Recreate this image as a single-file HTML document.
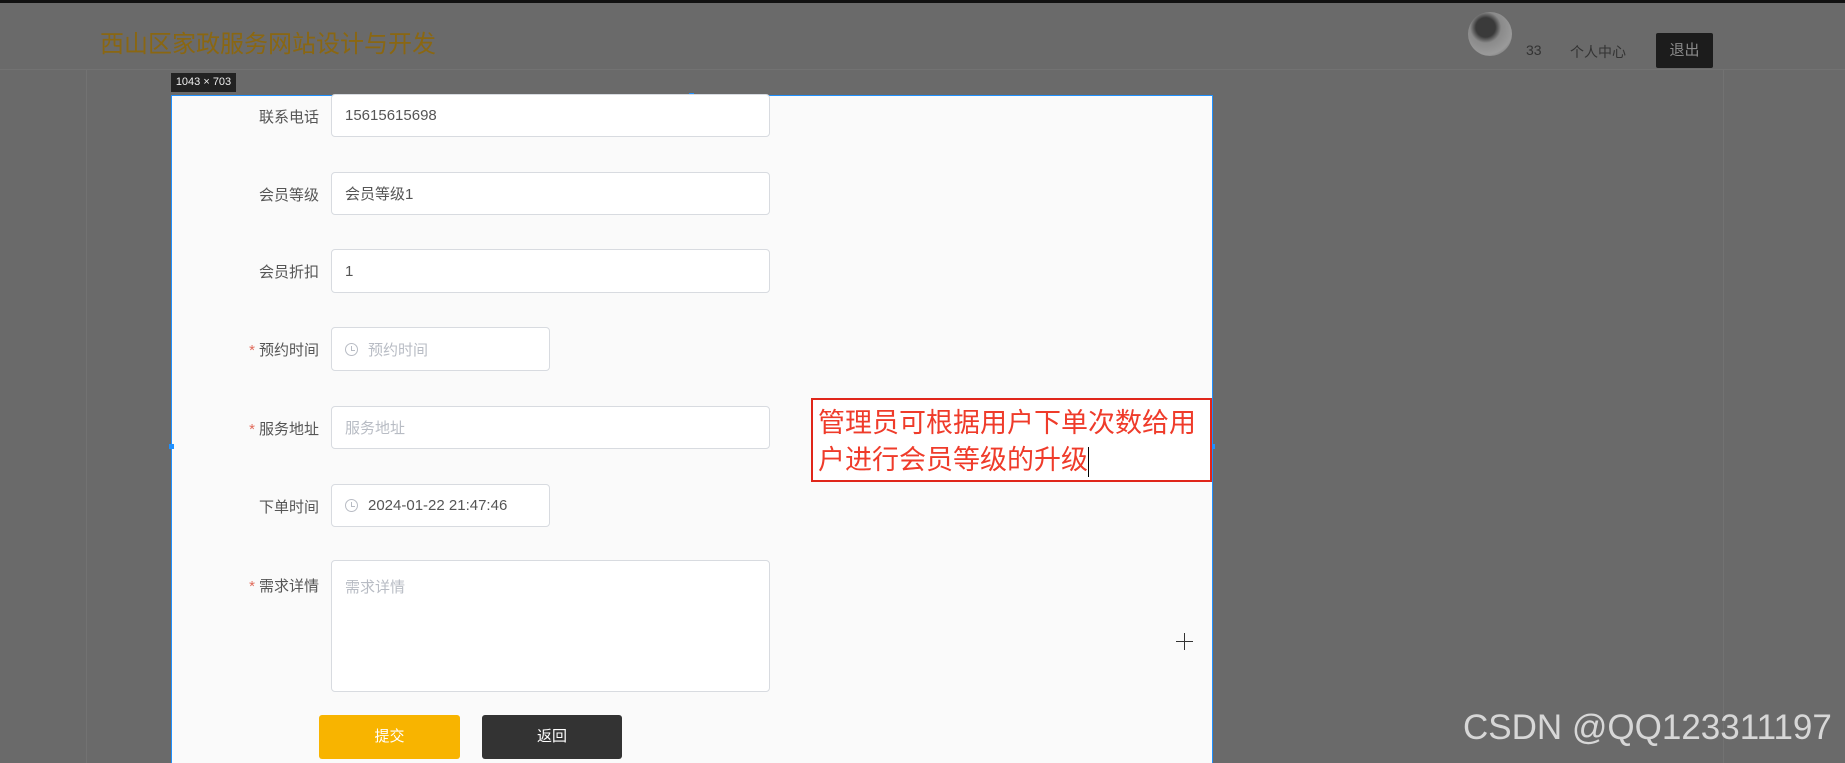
<!DOCTYPE html>
<html><head><meta charset="utf-8"><style>
*{margin:0;padding:0;box-sizing:border-box}
html,body{width:1845px;height:763px;overflow:hidden}
body{background:#6a6a6a;font-family:"Liberation Sans","Noto Sans CJK SC",sans-serif;position:relative}
.abs{position:absolute}
.lbl{position:absolute;right:calc(1845px - 319px);font-size:15px;color:#555;white-space:nowrap}
.star{color:#e06a5a;margin-right:4px}
.inp{position:absolute;left:331px;background:#fff;border:1px solid #d8dbe0;border-radius:4px;font-size:15px;color:#555;padding-left:13px;display:flex;align-items:center}
.ph{color:#b8bcc4}
.clk{width:13px;height:13px;border:1.5px solid #b8bcc4;border-radius:50%;margin-right:10px;position:relative}
.clk:after{content:"";position:absolute;left:4.5px;top:2px;width:3px;height:4px;border-left:1.5px solid #b8bcc4;border-bottom:1.5px solid #b8bcc4}
.h{position:absolute;width:5px;height:5px;background:#1e90ff}
</style></head><body>
<div class="abs" style="left:0;top:0;width:1845px;height:3px;background:#111"></div>
<div class="abs" style="left:0;top:69px;width:1845px;height:1px;background:#727272"></div>
<div class="abs" style="left:86px;top:70px;width:1px;height:700px;background:#727272"></div>
<div class="abs" style="left:1723px;top:70px;width:1px;height:700px;background:#727272"></div>
<div class="abs" style="left:100px;top:24px;font-size:24px;color:#8a6712">西山区家政服务网站设计与开发</div>
<div class="abs" style="left:1468px;top:12px;width:44px;height:44px;border-radius:50%;background:radial-gradient(circle at 40% 35%,#3a3a3a 0 25%,#8a8a8a 40%,#9a9a9a 70%,#555 100%)"></div>
<div class="abs" style="left:1526px;top:42px;font-size:14px;color:#333">33</div>
<div class="abs" style="left:1570px;top:42px;font-size:14px;color:#333">个人中心</div>
<div class="abs" style="left:1656px;top:33px;width:57px;height:35px;background:#1c1c1c;border-radius:2px;color:#8a8a8a;font-size:15px;text-align:center;line-height:35px">退出</div>
<div class="abs" style="left:171px;top:73px;width:65px;height:19px;background:#222;color:#eee;font-size:11px;line-height:19px;text-align:center">1043 × 703</div>
<div class="abs" style="left:171px;top:95px;width:1042px;height:680px;background:#fafafa;border:1px solid #1e90ff"></div>
<div class="h" style="left:689px;top:93px"></div>
<div class="h" style="left:169px;top:444px"></div>
<div class="h" style="left:1210px;top:444px"></div>

<div class="lbl" style="top:106px">联系电话</div>
<div class="inp" style="top:94px;width:439px;height:43px">15615615698</div>
<div class="lbl" style="top:184px">会员等级</div>
<div class="inp" style="top:172px;width:439px;height:43px">会员等级1</div>
<div class="lbl" style="top:261px">会员折扣</div>
<div class="inp" style="top:249px;width:439px;height:44px">1</div>
<div class="lbl" style="top:339px"><span class="star">*</span>预约时间</div>
<div class="inp" style="top:327px;width:219px;height:44px"><span class="clk"></span><span class="ph">预约时间</span></div>
<div class="lbl" style="top:418px"><span class="star">*</span>服务地址</div>
<div class="inp" style="top:406px;width:439px;height:43px"><span class="ph">服务地址</span></div>
<div class="lbl" style="top:496px">下单时间</div>
<div class="inp" style="top:484px;width:219px;height:43px"><span class="clk"></span>2024-01-22 21:47:46</div>
<div class="lbl" style="top:575px"><span class="star">*</span>需求详情</div>
<div class="inp" style="top:560px;width:439px;height:132px;align-items:flex-start;padding-top:15px"><span class="ph">需求详情</span></div>
<div class="abs" style="left:319px;top:715px;width:141px;height:44px;background:#f8b400;border-radius:3px;color:#fff;font-size:15px;text-align:center;line-height:44px">提交</div>
<div class="abs" style="left:482px;top:715px;width:140px;height:44px;background:#333;border-radius:3px;color:#fff;font-size:15px;text-align:center;line-height:44px">返回</div>

<div class="abs" style="left:811px;top:398px;width:401px;height:84px;border:2px solid #e0261a;background:#fff"></div>
<div class="abs" style="left:818px;top:405px;font-size:27px;line-height:37px;color:#ef3b2a;white-space:nowrap">管理员可根据用户下单次数给用<br>户进行会员等级的升级<span style="display:inline-block;width:1px;height:30px;background:#000;vertical-align:middle"></span></div>
<div class="abs" style="left:1176px;top:641px;width:17px;height:1px;background:#333"></div>
<div class="abs" style="left:1184px;top:633px;width:1px;height:17px;background:#333"></div>
<div class="abs" style="left:1463px;top:708px;font-size:35px;color:#eaeaea;opacity:.85;white-space:nowrap">CSDN @QQ123311197</div>
</body></html>
